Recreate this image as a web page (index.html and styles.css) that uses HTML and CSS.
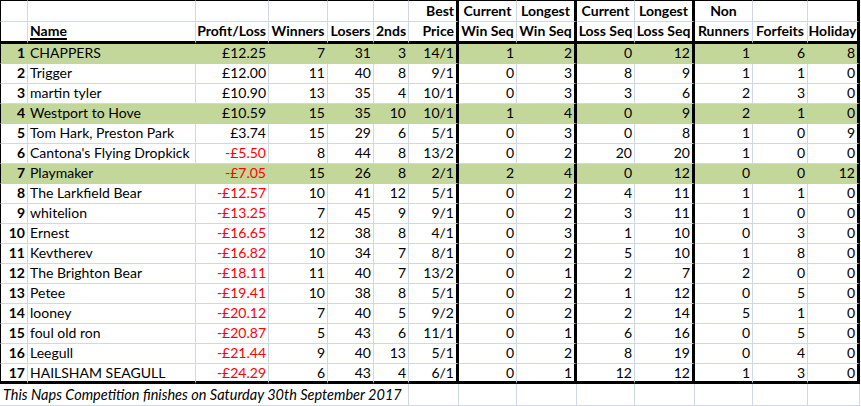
FILE: index.html
```html
<!DOCTYPE html>
<html>
<head>
<meta charset="utf-8">
<link rel="stylesheet" href="styles.css">
</head>
<body>
<div class="sheet">
  <div class="row hd1">
    <div class="c first"></div><div class="c"></div><div class="c"></div><div class="c"></div><div class="c"></div><div class="c"></div>
    <div class="c r b tk">Best</div>
    <div class="c m b">Current</div><div class="c m b tk">Longest</div>
    <div class="c m b">Current</div><div class="c m b tk">Longest</div>
    <div class="c m b">Non</div><div class="c"></div><div class="c tk"></div>
  </div>
  <div class="row hd2">
    <div class="c first"></div>
    <div class="c b"><span class="u">Name</span></div>
    <div class="c r b">Profit/Loss</div>
    <div class="c m b">Winners</div>
    <div class="c m b">Losers</div>
    <div class="c m b">2nds</div>
    <div class="c r b tk">Price</div>
    <div class="c m b">Win Seq</div><div class="c m b tk">Win Seq</div>
    <div class="c m b">Loss Seq</div><div class="c m b tk">Loss Seq</div>
    <div class="c m b">Runners</div><div class="c m b">Forfeits</div><div class="c m b tk">Holiday</div>
  </div>

  <div class="row g">
    <div class="c first r b">1</div><div class="c">CHAPPERS</div><div class="c r">£12.25</div><div class="c r">7</div><div class="c r">31</div><div class="c r">3</div><div class="c r tk">14/1</div>
    <div class="c r">1</div><div class="c r tk">2</div><div class="c r">0</div><div class="c r tk">12</div><div class="c r">1</div><div class="c r">6</div><div class="c r tk">8</div>
  </div>
  <div class="row">
    <div class="c first r b">2</div><div class="c">Trigger</div><div class="c r">£12.00</div><div class="c r">11</div><div class="c r">40</div><div class="c r">8</div><div class="c r tk">9/1</div>
    <div class="c r">0</div><div class="c r tk">3</div><div class="c r">8</div><div class="c r tk">9</div><div class="c r">1</div><div class="c r">1</div><div class="c r tk">0</div>
  </div>
  <div class="row">
    <div class="c first r b">3</div><div class="c">martin tyler</div><div class="c r">£10.90</div><div class="c r">13</div><div class="c r">35</div><div class="c r">4</div><div class="c r tk">10/1</div>
    <div class="c r">0</div><div class="c r tk">3</div><div class="c r">3</div><div class="c r tk">6</div><div class="c r">2</div><div class="c r">3</div><div class="c r tk">0</div>
  </div>
  <div class="row g">
    <div class="c first r b">4</div><div class="c">Westport to Hove</div><div class="c r">£10.59</div><div class="c r">15</div><div class="c r">35</div><div class="c r">10</div><div class="c r tk">10/1</div>
    <div class="c r">1</div><div class="c r tk">4</div><div class="c r">0</div><div class="c r tk">9</div><div class="c r">2</div><div class="c r">1</div><div class="c r tk">0</div>
  </div>
  <div class="row">
    <div class="c first r b">5</div><div class="c">Tom Hark, Preston Park</div><div class="c r">£3.74</div><div class="c r">15</div><div class="c r">29</div><div class="c r">6</div><div class="c r tk">5/1</div>
    <div class="c r">0</div><div class="c r tk">3</div><div class="c r">0</div><div class="c r tk">8</div><div class="c r">1</div><div class="c r">0</div><div class="c r tk">9</div>
  </div>
  <div class="row">
    <div class="c first r b">6</div><div class="c">Cantona's Flying Dropkick</div><div class="c r neg">-£5.50</div><div class="c r">8</div><div class="c r">44</div><div class="c r">8</div><div class="c r tk">13/2</div>
    <div class="c r">0</div><div class="c r tk">2</div><div class="c r">20</div><div class="c r tk">20</div><div class="c r">1</div><div class="c r">0</div><div class="c r tk">0</div>
  </div>
  <div class="row g">
    <div class="c first r b">7</div><div class="c">Playmaker</div><div class="c r neg">-£7.05</div><div class="c r">15</div><div class="c r">26</div><div class="c r">8</div><div class="c r tk">2/1</div>
    <div class="c r">2</div><div class="c r tk">4</div><div class="c r">0</div><div class="c r tk">12</div><div class="c r">0</div><div class="c r">0</div><div class="c r tk">12</div>
  </div>
  <div class="row">
    <div class="c first r b">8</div><div class="c">The Larkfield Bear</div><div class="c r neg">-£12.57</div><div class="c r">10</div><div class="c r">41</div><div class="c r">12</div><div class="c r tk">5/1</div>
    <div class="c r">0</div><div class="c r tk">2</div><div class="c r">4</div><div class="c r tk">11</div><div class="c r">1</div><div class="c r">1</div><div class="c r tk">0</div>
  </div>
  <div class="row">
    <div class="c first r b">9</div><div class="c">whitelion</div><div class="c r neg">-£13.25</div><div class="c r">7</div><div class="c r">45</div><div class="c r">9</div><div class="c r tk">9/1</div>
    <div class="c r">0</div><div class="c r tk">2</div><div class="c r">3</div><div class="c r tk">11</div><div class="c r">1</div><div class="c r">0</div><div class="c r tk">0</div>
  </div>
  <div class="row">
    <div class="c first r b">10</div><div class="c">Ernest</div><div class="c r neg">-£16.65</div><div class="c r">12</div><div class="c r">38</div><div class="c r">8</div><div class="c r tk">4/1</div>
    <div class="c r">0</div><div class="c r tk">3</div><div class="c r">1</div><div class="c r tk">10</div><div class="c r">0</div><div class="c r">3</div><div class="c r tk">0</div>
  </div>
  <div class="row">
    <div class="c first r b">11</div><div class="c">Kevtherev</div><div class="c r neg">-£16.82</div><div class="c r">10</div><div class="c r">34</div><div class="c r">7</div><div class="c r tk">8/1</div>
    <div class="c r">0</div><div class="c r tk">2</div><div class="c r">5</div><div class="c r tk">10</div><div class="c r">1</div><div class="c r">8</div><div class="c r tk">0</div>
  </div>
  <div class="row">
    <div class="c first r b">12</div><div class="c">The Brighton Bear</div><div class="c r neg">-£18.11</div><div class="c r">11</div><div class="c r">40</div><div class="c r">7</div><div class="c r tk">13/2</div>
    <div class="c r">0</div><div class="c r tk">1</div><div class="c r">2</div><div class="c r tk">7</div><div class="c r">2</div><div class="c r">0</div><div class="c r tk">0</div>
  </div>
  <div class="row">
    <div class="c first r b">13</div><div class="c">Petee</div><div class="c r neg">-£19.41</div><div class="c r">10</div><div class="c r">38</div><div class="c r">8</div><div class="c r tk">5/1</div>
    <div class="c r">0</div><div class="c r tk">2</div><div class="c r">1</div><div class="c r tk">12</div><div class="c r">0</div><div class="c r">5</div><div class="c r tk">0</div>
  </div>
  <div class="row">
    <div class="c first r b">14</div><div class="c">looney</div><div class="c r neg">-£20.12</div><div class="c r">7</div><div class="c r">40</div><div class="c r">5</div><div class="c r tk">9/2</div>
    <div class="c r">0</div><div class="c r tk">2</div><div class="c r">2</div><div class="c r tk">14</div><div class="c r">5</div><div class="c r">1</div><div class="c r tk">0</div>
  </div>
  <div class="row">
    <div class="c first r b">15</div><div class="c">foul old ron</div><div class="c r neg">-£20.87</div><div class="c r">5</div><div class="c r">43</div><div class="c r">6</div><div class="c r tk">11/1</div>
    <div class="c r">0</div><div class="c r tk">1</div><div class="c r">6</div><div class="c r tk">16</div><div class="c r">0</div><div class="c r">5</div><div class="c r tk">0</div>
  </div>
  <div class="row">
    <div class="c first r b">16</div><div class="c">Leegull</div><div class="c r neg">-£21.44</div><div class="c r">9</div><div class="c r">40</div><div class="c r">13</div><div class="c r tk">5/1</div>
    <div class="c r">0</div><div class="c r tk">2</div><div class="c r">8</div><div class="c r tk">19</div><div class="c r">0</div><div class="c r">4</div><div class="c r tk">0</div>
  </div>
  <div class="row last">
    <div class="c first r b">17</div><div class="c">HAILSHAM SEAGULL</div><div class="c r neg">-£24.29</div><div class="c r">6</div><div class="c r">43</div><div class="c r">4</div><div class="c r tk">6/1</div>
    <div class="c r">0</div><div class="c r tk">1</div><div class="c r">12</div><div class="c r tk">12</div><div class="c r">1</div><div class="c r">3</div><div class="c r tk">0</div>
  </div>

  <div class="row foot">
    <div class="c note">This Naps Competition finishes on Saturday 30th September 2017</div>
    <div class="c"></div><div class="c"></div><div class="c"></div><div class="c"></div><div class="c"></div><div class="c"></div><div class="c"></div><div class="c"></div>
  </div>
</div>
</body>
</html>
```

FILE: styles.css
```css
html, body {
  margin: 0;
  padding: 0;
  background: #ffffff;
}

.sheet {
  display: grid;
  grid-template-columns: 28px 168px 73px 59px 46px 35px 50px 58px 60px 58px 60px 58px 55px 52px;
  grid-template-rows: 22px 22px repeat(17, 20px) 22px;
  width: 860px;
  font-family: "Lato", "Open Sans", sans-serif;
  font-size: 14px;
  color: #000000;
}

.row {
  display: contents;
}

.c {
  box-sizing: border-box;
  display: flex;
  align-items: flex-end;
  justify-content: flex-start;
  line-height: 16px;
  padding: 0 2px 2px 2px;
  white-space: nowrap;
  overflow: visible;
  border-right: 1px solid #d0d7e5;
  border-bottom: 1px solid #d0d7e5;
}

.c.r { justify-content: flex-end; }
.c.m { justify-content: center; padding-left: 0; padding-right: 0; }
.c.b { font-weight: 700; }
.u {
  text-decoration: underline;
  text-decoration-thickness: 2px;
  text-underline-offset: 2px;
}
.c.neg { color: #ff0000; }

.c.first { border-left: 1px solid #000000; }

.hd1 > .c { border-top: 1px solid #000000; }
.hd2 > .c { border-bottom: 3px solid #000000; padding-bottom: 2px; }

.g > .c {
  background: #c4d79b;
  border-right-color: #c4d79b;
  border-bottom-color: #c4d79b;
}

.c.tk,
.g > .c.tk {
  border-right: 3px solid #000000;
}

.c.first,
.g > .c.first { border-left-color: #000000; }

.last > .c { border-bottom: 3px solid #000000; padding-bottom: 0; }

.foot > .c.note {
  grid-column: span 6;
  font-style: italic;
  font-size: 14.5px;
  padding-left: 3px;
  border-left: none;
}
```
